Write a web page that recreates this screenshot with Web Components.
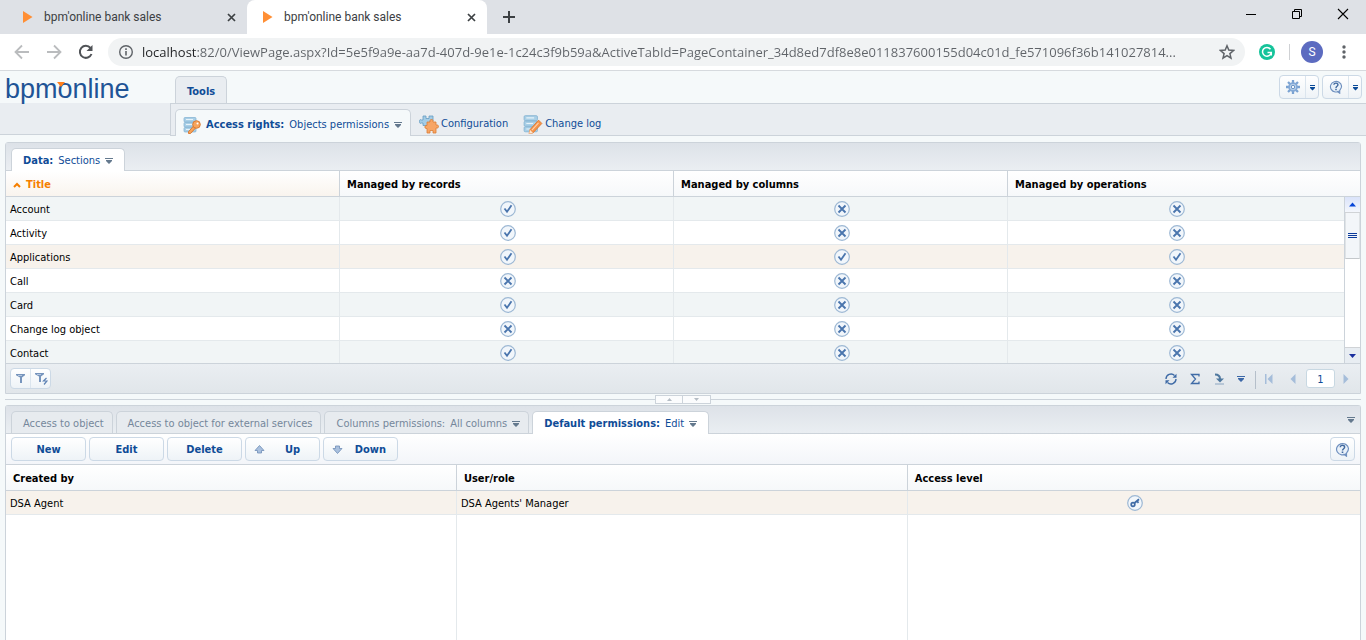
<!DOCTYPE html>
<html lang="en">
<head>
  <meta charset="utf-8" />
  <title>bpm'online bank sales</title>
  <style>
    html,
    body {
      height: 100%;
      margin: 0;
    }
    body {
      font: 11px/14px "DejaVu Sans Condensed", "Open Sans", sans-serif;
      color: #000;
      background: #f5f9fa;
      --line: #ccd3da;
      --link: #0f4c97;
    }
  </style>
</head>
<body>
  <bpm-app></bpm-app>

  <template id="browser-tab">
    <style>
      :host {
        display: flex;
        align-items: center;
        box-sizing: border-box;
        width: 240px;
        height: 34px;
        padding: 0 8px 0 14px;
        border-radius: 8px 8px 0 0;
        color: #3c4043;
        font: 12px/16px Roboto, sans-serif;
      }
      :host([active]) {
        background: #fff;
      }
      span {
        flex: 1;
        margin-left: 11px;
      }
      button {
        display: flex;
        padding: 2px;
        border: 0;
        background: none;
      }
    </style>
    <ui-icon name="play" size="12"></ui-icon>
    <span><slot></slot></span>
    <button aria-label="Close tab"><ui-icon name="x" size="11"></ui-icon></button>
  </template>

  <template id="browser-bar">
    <style>
      :host {
        display: block;
        background: #fff;
        border-bottom: 1px solid #d6dade;
      }
      button {
        display: flex;
        padding: 0;
        border: 0;
        background: none;
      }
      .tabs {
        display: flex;
        align-items: center;
        height: 34px;
        padding-left: 7px;
        background: #dee1e6;
      }
      .plus {
        margin-left: 15px;
        flex: 1;
      }
      .win {
        width: 46px;
        justify-content: center;
        align-self: flex-start;
        padding-top: 7px;
      }
      .bar {
        display: flex;
        align-items: center;
        height: 36px;
        padding: 0 14px;
      }
      .nav {
        display: flex;
        gap: 16px;
      }
      .address {
        display: flex;
        align-items: center;
        flex: 1;
        height: 28px;
        margin-left: 14px;
        padding: 0 10px;
        border-radius: 14px;
        background: #f1f3f4;
      }
      input {
        flex: 1;
        min-width: 0;
        margin: 0 10px 0 8px;
        padding: 0;
        border: 0;
        outline: 0;
        background: linear-gradient(to right, #202124 55px, #5f6368 55px);
        -webkit-background-clip: text;
        background-clip: text;
        -webkit-text-fill-color: transparent;
        color: #5f6368;
        font: 13px/20px "Open Sans", sans-serif;
        text-overflow: ellipsis;
      }
      .sep {
        width: 1px;
        height: 16px;
        margin: 0 11px 0 14px;
        background: #cfd1d4;
      }
      .g,
      .avatar {
        display: flex;
        align-items: center;
        justify-content: center;
        border-radius: 50%;
        color: #fff;
      }
      .g {
        margin-left: 14px;
      }
      .avatar {
        width: 22px;
        height: 22px;
        background: #5c6bc0;
        font: 12px/22px Roboto, sans-serif;
        margin-right: 13px;
      }
    </style>
    <div class="tabs">
      <browser-tab>bpm'online bank sales</browser-tab>
      <browser-tab active>bpm'online bank sales</browser-tab>
      <button class="plus" aria-label="New tab"><ui-icon name="plus" size="14"></ui-icon></button>
      <button class="win" aria-label="Minimize"><ui-icon name="min" size="14"></ui-icon></button>
      <button class="win" aria-label="Restore"><ui-icon name="restore" size="14"></ui-icon></button>
      <button class="win" aria-label="Close"><ui-icon name="close" size="14"></ui-icon></button>
    </div>
    <div class="bar">
      <div class="nav">
        <button aria-label="Back"><ui-icon name="back" size="16"></ui-icon></button>
        <button aria-label="Forward"><ui-icon name="forward" size="16"></ui-icon></button>
        <button aria-label="Reload"><ui-icon name="reload" size="16"></ui-icon></button>
      </div>
      <div class="address">
        <ui-icon name="info" size="16"></ui-icon>
        <input aria-label="Address" value="localhost:82/0/ViewPage.aspx?Id=5e5f9a9e-aa7d-407d-9e1e-1c24c3f9b59a&amp;ActiveTabId=PageContainer_34d8ed7df8e8e011837600155d04c01d_fe571096f36b141027814..." />
        <button aria-label="Bookmark"><ui-icon name="star" size="16"></ui-icon></button>
      </div>
      <span class="g"><ui-icon name="grammarly" size="16"></ui-icon></span>
      <span class="sep"></span>
      <button class="avatar">S</button>
      <button aria-label="Menu"><ui-icon name="dots" size="16"></ui-icon></button>
    </div>
  </template>

  <!-- tab used in the ribbon and on the panels -->
  <template id="bpm-tab">
    <style>
      :host {
        display: flex;
      }
      button {
        display: flex;
        align-items: center;
        gap: 5px;
        height: 22px;
        padding: 2px 8px 0 11px;
        border: 1px solid var(--line);
        border-bottom: 0;
        border-radius: 5px 5px 0 0;
        background: #e7ebef;
        color: #75879b;
        font: inherit;
        white-space: nowrap;
      }
      :host([active]) button {
        background: #fff;
        color: var(--link);
        height: 23px;
        margin-bottom: -1px;
        padding-right: 11px;
      }
      :host([active]) b {
        font-weight: bold;
      }
      b {
        font-weight: normal;
      }
      :host([ribbon]) button {
        height: 27px;
        padding: 3px 8px 0 7px;
        gap: 5px;
      }
      :host([ribbon][active]) button {
        padding-right: 8px;
        background: #f5f9fa;
      }
      :host([ribbon]:not([active])) button {
        height: 26px;
        gap: 2px;
        padding: 2px 6px 0 7px;
        border-color: transparent;
        background: none;
        color: var(--link);
      }
      :host([top]) button {
        height: 28px;
        padding: 2px 11px 0;
        background: #e9edf1;
      }
    </style>
    <button><slot name="icon"></slot><b><slot></slot></b><slot name="value"></slot></button>
  </template>

  <template id="bpm-button">
    <style>
      :host {
        display: flex;
      }
      button {
        display: flex;
        align-items: center;
        justify-content: center;
        min-width: 75px;
        height: 24px;
        padding: 2px 10px 0;
        border: 1px solid #ccd9e6;
        border-radius: 4px;
        background: linear-gradient(#fff, #eef3f7);
        color: var(--link);
        font: inherit;
        font-weight: bold;
      }
      :host([small]) button {
        min-width: 0;
        padding: 0 4px;
      }
      :host([arrow]) button {
        justify-content: space-between;
        padding: 2px 11px 0 8px;
      }
      :host([arrow="up"]) button {
        padding-right: 19px;
      }
    </style>
    <button><slot></slot></button>
  </template>

  <!-- two buttons sharing one frame -->
  <template id="bpm-split">
    <style>
      :host {
        display: flex;
        overflow: hidden;
        border: 1px solid #ccd9e6;
        border-radius: 4px;
        background: linear-gradient(#fff, #eef3f7);
      }
      button {
        display: flex;
        align-items: center;
        justify-content: center;
        width: 25px;
        height: 22px;
        padding: 0;
        border: 0;
        background: none;
      }
      button + button {
        width: 13px;
        border-left: 1px solid #dbe5ee;
      }
      :host([even]) button {
        width: 19px;
        height: 19px;
      }
      :host([even]) button + button {
        width: 20px;
      }
    </style>
    <button aria-label="Open"><slot name="a"></slot></button>
    <button aria-label="More"><slot name="b"></slot></button>
  </template>

  <template id="bpm-header">
    <style>
      :host {
        display: grid;
        grid-template-columns: 170px 1fr;
      }
      .logo {
        position: relative;
        height: 32px;
        box-sizing: border-box;
        padding-left: 5px;
        color: #1f5496;
        font: 27px/36px "Liberation Sans", sans-serif;
      }
      .logo i {
        position: absolute;
        left: 57px;
        top: 11px;
        border: 4px solid transparent;
        border-top: 5px solid #ff7e1b;
        border-bottom: 0;
      }
      .top {
        display: flex;
        align-items: flex-end;
        padding-left: 5px;
        padding-right: 4px;
      }
      .tools {
        display: flex;
        gap: 3px;
        margin-left: auto;
        align-self: center;
      }
      .left {
        height: 31px;
        background: #e9edf1;
        border-bottom: 1px solid var(--line);
      }
      .ribbon {
        display: flex;
        align-items: flex-end;
        height: 33px;
        box-sizing: border-box;
        padding-left: 4px;
        border: solid var(--line);
        border-width: 1px 0 1px 1px;
        background: #e9edf1;
      }
    </style>
    <div class="logo">bpmonline<i></i></div>
    <div class="top">
      <bpm-tab top active>Tools</bpm-tab>
      <div class="tools">
        <bpm-split><ui-icon slot="a" name="gear" size="14"></ui-icon><ui-icon slot="b" name="dropblue" size="7"></ui-icon></bpm-split>
        <bpm-split><ui-icon slot="a" name="help" size="14"></ui-icon><ui-icon slot="b" name="dropblue" size="7"></ui-icon></bpm-split>
      </div>
    </div>
    <div class="left"></div>
    <div class="ribbon">
      <bpm-tab ribbon active><ui-icon slot="icon" name="rights" size="18"></ui-icon>Access rights:<span slot="value">Objects permissions</span><ui-icon slot="value" name="drop" size="8"></ui-icon></bpm-tab>
      <bpm-tab ribbon><ui-icon slot="icon" name="config" size="20"></ui-icon>Configuration</bpm-tab>
      <bpm-tab ribbon><ui-icon slot="icon" name="log" size="20"></ui-icon>Change log</bpm-tab>
    </div>
  </template>

  <template id="bpm-panel">
    <style>
      :host {
        display: flex;
        flex-direction: column;
        border: 1px solid var(--line);
        border-radius: 3px 3px 0 0;
        background: #fff;
      }
      .tabs {
        display: flex;
        align-items: flex-end;
        gap: 3px;
        height: 27px;
        padding: 0 5px;
        border-bottom: 1px solid var(--line);
        background: linear-gradient(#dde2e8, #eaeef2);
      }
      .body {
        flex: 1;
        min-height: 0;
      }
    </style>
    <div class="tabs"><slot name="tab"></slot></div>
    <slot name="toolbar"></slot>
    <div class="body"><slot></slot></div>
    <slot name="footer"></slot>
  </template>

  <template id="bpm-grid">
    <style>
      :host {
        display: block;
        position: relative;
        height: 100%;
        overflow: hidden;
      }
      table {
        width: 100%;
        border-collapse: separate;
        border-spacing: 0;
        table-layout: fixed;
      }
      :host([fill]) table {
        height: 100%;
      }
      th {
        box-sizing: border-box;
        width: 33.3%;
        height: 26px;
        padding: 2px 7px 0;
        border-right: 1px solid var(--line);
        border-bottom: 1px solid var(--line);
        background: linear-gradient(#fff, #f6f8fa);
        text-align: left;
      }
      :host([scroll]) th {
        width: 24.67%;
      }
      th:last-child,
      :host([scroll]) th:last-child {
        width: auto;
        border-right: 0;
      }
      th.sorted {
        background: linear-gradient(#fff, #f9f4ee);
        color: #f57f00;
      }
      th.sorted ui-icon {
        display: inline-block;
        margin-right: 5px;
      }
      td {
        height: 21px;
        padding: 2px 4px 0;
        border-right: 1px solid #e4e9ec;
        border-bottom: 1px solid #e4e9ec;
      }
      td.icon {
        height: 23px;
        padding: 0 4px 0 6px;
      }
      td:last-child {
        border-right: 0;
      }
      td ui-icon {
        margin: 0 auto;
      }
      :host([scroll]) td:last-child {
        padding-right: 20px;
      }
      :host([scroll]) tr:nth-child(odd) td {
        background: #f1f5f6;
      }
      tr.selected td,
      :host([scroll]) tr.selected td {
        background: #f7f2ec;
      }
      tr.rest td {
        height: auto;
        border-bottom: 0;
      }
      .scroll {
        position: absolute;
        top: 26px;
        right: 0;
        bottom: 0;
        width: 15px;
        display: none;
        flex-direction: column;
        border-left: 1px solid var(--line);
        background: #fff;
      }
      :host([scroll]) .scroll {
        display: flex;
      }
      .arrow {
        display: flex;
        justify-content: center;
        align-items: center;
        height: 16px;
        margin: 0;
        padding: 0;
        border: 0;
        border-bottom: 1px solid #d0d3d6;
        background: linear-gradient(#dae3fa, #f4f7fc);
      }
      .arrow.down {
        margin-top: auto;
        border-bottom: 0;
        border-top: 1px solid #d0d3d6;
        background: #e8edf2;
      }
      .thumb {
        display: flex;
        align-items: center;
        justify-content: center;
        height: 45px;
        border: 1px solid #dfe3e6;
        border-bottom-color: #c4c8cb;
        border-top: 0;
        background: #f3f6f9;
      }
    </style>
    <table>
      <thead></thead>
      <tbody></tbody>
    </table>
    <div class="scroll">
      <button class="arrow" aria-label="Scroll up"><ui-icon name="sup" size="7"></ui-icon></button>
      <div class="thumb"><ui-icon name="grip" size="9"></ui-icon></div>
      <button class="arrow down" aria-label="Scroll down"><ui-icon name="sdown" size="7"></ui-icon></button>
    </div>
  </template>

  <template id="bpm-pager">
    <style>
      :host {
        display: flex;
        align-items: center;
        height: 29px;
        padding: 0 8px 0 4px;
        border-top: 1px solid var(--line);
        background: linear-gradient(#eaeef2, #e1e6ea);
      }
      button {
        display: flex;
        padding: 0;
        border: 0;
        background: none;
      }
      .right {
        display: flex;
        align-items: center;
        gap: 12px;
        margin-left: auto;
      }
      .sep {
        width: 1px;
        height: 18px;
        margin: 3px -5px 0 -2px;
        background: #b5bfca;
      }
      input {
        box-sizing: border-box;
        width: 29px;
        height: 19px;
        margin: 0 -7px 0 -5px;
        padding: 1px 0 0;
        border: 1px solid #c8d8e2;
        border-radius: 3px;
        background: #fff;
        color: var(--link);
        font: inherit;
        text-align: center;
      }
    </style>
    <bpm-split even><ui-icon slot="a" name="filter" size="11"></ui-icon><ui-icon slot="b" name="filterfast" size="14"></ui-icon></bpm-split>
    <div class="right">
      <button aria-label="Refresh"><ui-icon name="refresh" size="12"></ui-icon></button>
      <button aria-label="Total"><ui-icon name="sigma" size="12"></ui-icon></button>
      <button aria-label="Export"><ui-icon name="export" size="12"></ui-icon></button>
      <button aria-label="More"><ui-icon name="dropmid" size="8"></ui-icon></button>
      <span class="sep"></span>
      <button aria-label="First page"><ui-icon name="first" size="12"></ui-icon></button>
      <button aria-label="Previous page"><ui-icon name="prev" size="12"></ui-icon></button>
      <input aria-label="Page" value="1" />
      <button aria-label="Next page"><ui-icon name="next" size="12"></ui-icon></button>
    </div>
  </template>

  <template id="bpm-splitter">
    <style>
      :host {
        display: flex;
        align-items: center;
        height: 11px;
      }
      hr {
        flex: 1;
        margin: 0;
        border: 0;
        border-top: 1px solid var(--line);
      }
      button {
        display: flex;
        align-items: center;
        justify-content: center;
        width: 28px;
        height: 9px;
        padding: 0;
        border: 1px solid var(--line);
        background: #fbfcfd;
      }
      button + button {
        border-left: 0;
      }
    </style>
    <hr />
    <button aria-label="Collapse up"><ui-icon name="tinyup" size="5"></ui-icon></button>
    <button aria-label="Collapse down"><ui-icon name="tinydown" size="5"></ui-icon></button>
    <hr />
  </template>

  <template id="bpm-app">
    <style>
      :host {
        display: flex;
        flex-direction: column;
        height: 100vh;
        overflow: hidden;
      }
      main {
        flex: 1;
        min-height: 0;
        display: flex;
        flex-direction: column;
        padding: 6px 5px 0;
      }
      .sections bpm-grid {
        height: 192px;
      }
      .details {
        flex: 1;
        min-height: 0;
        border-bottom: 0;
      }
      .toolbar {
        display: flex;
        gap: 3px;
        padding: 3px 5px;
        border-bottom: 1px solid var(--line);
        background: linear-gradient(#fff, #f3f5f9);
      }
      .end {
        margin-left: auto;
      }
      .menu {
        align-self: center;
      }
    </style>
    <browser-bar></browser-bar>
    <bpm-header></bpm-header>
    <main>
      <bpm-panel class="sections">
        <bpm-tab slot="tab" active>Data:<span slot="value">Sections</span><ui-icon slot="value" name="drop" size="8"></ui-icon></bpm-tab>
        <bpm-grid id="sections" scroll></bpm-grid>
        <bpm-pager slot="footer"></bpm-pager>
      </bpm-panel>
      <bpm-splitter></bpm-splitter>
      <bpm-panel class="details">
        <bpm-tab slot="tab">Access to object</bpm-tab>
        <bpm-tab slot="tab">Access to object for external services</bpm-tab>
        <bpm-tab slot="tab">Columns permissions:<span slot="value">All columns</span><ui-icon slot="value" name="drop" size="8"></ui-icon></bpm-tab>
        <bpm-tab slot="tab" active>Default permissions:<span slot="value">Edit</span><ui-icon slot="value" name="drop" size="8"></ui-icon></bpm-tab>
        <ui-icon slot="tab" class="end menu" name="drop" size="8"></ui-icon>
        <div class="toolbar" slot="toolbar">
          <bpm-button>New</bpm-button>
          <bpm-button>Edit</bpm-button>
          <bpm-button>Delete</bpm-button>
          <bpm-button arrow="up"><ui-icon name="up" size="11"></ui-icon>Up</bpm-button>
          <bpm-button arrow="down"><ui-icon name="down" size="11"></ui-icon>Down</bpm-button>
          <bpm-button class="end" small><ui-icon name="help" size="15"></ui-icon></bpm-button>
        </div>
        <bpm-grid id="roles" fill></bpm-grid>
      </bpm-panel>
    </main>
  </template>

  <script>
    // each icon: viewBox size and content
    const dropShape = (c) => `<path fill="${c}" d="M0 1h8v1H0zM1 3h6v1L4 7 1 4z"/>`;
    const ring = `<circle cx="8" cy="8" r="7.300" fill="#f1f6fb" stroke="#9db8d4" stroke-width="1.200"/>`;
    const sheets = `<g fill="#a9cfe6" stroke="#7fb0d1" stroke-width=".7"><rect x="1" y="1.500" width="12" height="4.500" rx="1"/><rect x="1" y="6.500" width="12" height="4.500" rx="1"/><rect x="1" y="11.500" width="12" height="4.500" rx="1"/></g><path stroke="#e6f3fa" d="M3 3.500h7M3 8.500h6M3 13.500h4"/>`;
    const funnel = `<path fill="#7795bd" d="M1 1h9v1.200L7 4.500V10H5V4.500L1 2.200z"/><path stroke="#c6d5e8" stroke-width=".8" d="M3 2.500h4"/>`;
    const ICONS = {
      play: [12, `<path fill="#ff8f35" d="M2 0v12l9.500-6z"/>`],
      x: [11, `<path stroke="#3c4043" stroke-width="1.700" d="M2 2l7 7M9 2l-7 7"/>`],
      plus: [14, `<path stroke="#3c4043" stroke-width="2" d="M7 1v12M1 7h12"/>`],
      min: [14, `<path fill="#000" d="M2 7h10v1H2z"/>`],
      restore: [14, `<path fill="none" stroke="#000" d="M2.500 4.500h7v7h-7zM4.500 4.500v-2h7v7h-2"/>`],
      close: [14, `<path stroke="#000" stroke-width="1.100" d="M2 2l10 10M12 2L2 12"/>`],
      back: [16, `<path fill="none" stroke="#babcbe" stroke-width="1.800" d="M15 8H2M8 1.500L1.500 8 8 14.500"/>`],
      forward: [16, `<path fill="none" stroke="#babcbe" stroke-width="1.800" d="M1 8h13M8 1.500L14.500 8 8 14.500"/>`],
      reload: [16, `<path fill="none" stroke="#505357" stroke-width="2" d="M13.500 10A6 6 0 1 1 12.500 4"/><path fill="#505357" d="M14.500 1v6h-6z"/>`],
      info: [16, `<circle cx="8" cy="8" r="6.300" fill="none" stroke="#5f6368" stroke-width="1.400"/><path fill="#5f6368" d="M7.200 7h1.600v4.500H7.200zM7.200 4.300h1.600v1.600H7.200z"/>`],
      star: [16, `<path fill="none" stroke="#5f6368" stroke-width="1.500" d="M8 1.800l1.800 4.300 4.700.4-3.600 3.100 1.100 4.600L8 11.700l-4 2.500 1.100-4.600L1.500 6.500l4.700-.4z"/>`],
      grammarly: [16, `<circle cx="8" cy="8" r="8" fill="#15c39a"/><path fill="none" stroke="#fff" stroke-width="1.500" d="M11.500 5.200A4.400 4.400 0 1 0 12.300 8.500H8.500M12.300 8.300v3.200"/>`],
      dots: [16, `<g fill="#5f6368"><circle cx="8" cy="3" r="1.700"/><circle cx="8" cy="8" r="1.700"/><circle cx="8" cy="13" r="1.700"/></g>`],
      drop: [8, dropShape("#64798e")],
      dropmid: [8, dropShape("#3c68a8")],
      dropblue: [7, `<path fill="#0a4a98" d="M1 1h5v1H1zM1 3h5v1L3.500 6.500 1 4z"/>`],
      gear: [16, `<path stroke="#7aa2d2" stroke-width="2.600" d="M8 0v16M0 8h16M2.300 2.300l11.400 11.400M13.700 2.300L2.300 13.700"/><circle cx="8" cy="8" r="5.500" fill="#84a9d6"/><circle cx="8" cy="8" r="3.500" fill="#c4d8ee"/><circle cx="8" cy="8" r="2" fill="#f4f8fc" stroke="#5583bc"/>`],
      help: [15, `<path fill="#e9f1f9" stroke="#6f90bf" stroke-width="1.200" d="M11.500 11.500A6 5.700 0 1 1 13.500 6.500C13.500 9 12 10.300 11.500 11v3.200L8.500 12"/><path fill="none" stroke="#41699f" stroke-width="1.500" d="M5.300 5.200c0-2.600 4.300-2.400 4.300 0C9.600 6.700 7.500 6.800 7.500 8.500"/><path fill="#41699f" d="M6.700 9.500h1.600V11H6.700z"/>`],
      rights: [18, sheets + `<g fill="#f6a45c" stroke="#d8752a" stroke-width=".9"><path d="M11 9.500l2 2-5.500 6H5.500v-1.800z"/><circle cx="13.500" cy="8.500" r="3.800"/></g><circle cx="14.500" cy="7.500" r="1" fill="#fff"/>`],
      log: [18, sheets + `<path fill="#f5934a" stroke="#d8752a" stroke-width=".7" d="M14 5.500l3 3-8 8.500-3.500.7.700-3.500z"/><path stroke="#ffd0a8" d="M14 8l-6 6.500"/><path fill="#fbe6d2" d="M6.200 14.200l2.800 2.800-3.500.7z"/>`],
      config: [20, `<path fill="#a3cce6" stroke="#669dc2" stroke-width=".8" d="M4 2h3v2.500h3V2h4v5h-3v6H7.500v-1.500H4V9H2.500C1 10 .5 9 .5 7.500S1 5 2.500 6H4z"/><path fill="#f7a565" stroke="#dc7f35" stroke-width=".8" d="M8 8h3V6.500c0-1.300 3-1.300 3 0V8h3v3h1.500c1.300 0 1.300 3 0 3H17v5h-3v-2.500h-3V19H8v-4.500H7c-1.500 0-1.500-3 0-3h1z"/>`],
      sort: [8, `<path fill="none" stroke="#f57f00" stroke-width="2" d="M1 7l3-3 3 3"/>`],
      yes: [16, ring + `<path fill="none" stroke="#4a75ad" stroke-width="1.800" d="M4.500 7.500L7 10.800l4.500-6.500"/>`],
      no: [16, ring + `<path stroke="#4a75ad" stroke-width="1.900" d="M4.500 4.500l7 7M11.500 4.500l-7 7"/>`],
      key: [16, ring + `<circle cx="6" cy="9.500" r="1.800" fill="none" stroke="#3f6ba6" stroke-width="1.700"/><path stroke="#3f6ba6" stroke-width="1.800" d="M7.500 8L12 4.200M10 6l1.500 1.800"/>`],
      sup: [7, `<path fill="#0645d8" d="M0 5.500h7L3.500 1.500z"/>`],
      sdown: [7, `<path fill="#1a2f9e" d="M0 2h7L3.500 6z"/>`],
      grip: [9, `<path fill="#0b3a9b" d="M0 2h9v1H0zM0 4h9v1H0zM0 6h9v1H0z"/>`],
      up: [11, `<path fill="#a9c0de" stroke="#6f8db6" stroke-width=".8" d="M5.500.5L10 5.500H7.500V8h-4V5.500H1z"/>`],
      down: [11, `<path fill="#a9c0de" stroke="#6f8db6" stroke-width=".8" d="M5.500 8.500L10 3.500H7.500V1h-4v2.500H1z"/>`],
      tinyup: [5, `<path fill="#b4bcc4" d="M0 4h5L2.500 1z"/>`],
      tinydown: [5, `<path fill="#b4bcc4" d="M0 1h5L2.500 4z"/>`],
      filter: [11, funnel],
      filterfast: [14, funnel + `<path fill="none" stroke="#5f83b5" stroke-width="1.200" d="M12.500 6L9.500 9h3.500L10 12.500"/>`],
      refresh: [12, `<g fill="none" stroke="#3f6ba6" stroke-width="1.400"><path d="M1 6A5 5 0 0 1 9.500 2.500"/><path d="M11 6A5 5 0 0 1 2.500 9.500"/></g><path fill="#3f6ba6" d="M11.500.8v4H7.500zM.5 11.200v-4h4z"/>`],
      sigma: [12, `<path fill="none" stroke="#3f6ba6" stroke-width="1.300" d="M10 3.500V1.500H2.500L6.500 6l-4 4.500H10v-2"/>`],
      export: [12, `<path fill="none" stroke="#4f789f" stroke-width="2" d="M2 1.500C5.500 1.500 7 3 7 6"/><path fill="#4f789f" d="M3 5.500h8L7 9.500z"/><path fill="#8aa5c0" d="M2 10.500h9v1H2z"/>`],
      first: [12, `<path fill="#a5bdda" d="M2 1h1.500v10H2zM9.500 1v10l-5-5z"/>`],
      prev: [12, `<path fill="#a5bdda" d="M8.500 1v10l-5-5z"/>`],
      next: [12, `<path fill="#a5bdda" d="M3.500 1v10l5-5z"/>`],
    };

    class UiIcon extends HTMLElement {
      connectedCallback() {
        if (this.shadowRoot) return;
        const [box, body] = ICONS[this.getAttribute("name")];
        const size = this.getAttribute("size") || box;
        this.attachShadow({ mode: "open" });
        this.shadowRoot.innerHTML = `
          <style>
            :host { display: block; flex: none; width: ${size}px; height: ${size}px; }
            svg { display: block; }
          </style>
          <svg width="${size}" height="${size}" viewBox="0 0 ${box} ${box}" aria-hidden="true">${body}</svg>`;
      }
    }
    customElements.define("ui-icon", UiIcon);

    class TemplateElement extends HTMLElement {
      connectedCallback() {
        if (this.shadowRoot) return;
        const template = document.getElementById(this.localName);
        this.attachShadow({ mode: "open" });
        this.shadowRoot.append(template.content.cloneNode(true));
        this.ready();
      }
      ready() {}
    }

    class BpmGrid extends TemplateElement {
      // columns: titles, rows: arrays of text or icon:name
      show(columns, rows, selected, sorted) {
        const cell = (value) =>
          value.startsWith("icon:")
            ? `<td class="icon"><ui-icon name="${value.slice(5)}" size="16"></ui-icon></td>`
            : `<td>${value}</td>`;
        const head = columns.map((title, i) =>
          i === sorted
            ? `<th class="sorted"><ui-icon name="sort" size="8"></ui-icon>${title}</th>`
            : `<th>${title}</th>`
        );
        this.shadowRoot.querySelector("thead").innerHTML = `<tr>${head.join("")}</tr>`;
        let html = rows
          .map((row, i) => `<tr class="${i === selected ? "selected" : ""}">${row.map(cell).join("")}</tr>`)
          .join("");
        if (this.hasAttribute("fill")) {
          html += `<tr class="rest">${"<td></td>".repeat(columns.length)}</tr>`;
        }
        this.shadowRoot.querySelector("tbody").innerHTML = html;
      }
    }

    class BpmApp extends TemplateElement {
      ready() {
        const y = "icon:yes";
        const n = "icon:no";
        this.shadowRoot.querySelector("#sections").show(
          ["Title", "Managed by records", "Managed by columns", "Managed by operations"],
          [
            ["Account", y, n, n],
            ["Activity", y, n, n],
            ["Applications", y, y, y],
            ["Call", n, n, n],
            ["Card", y, n, n],
            ["Change log object", n, n, n],
            ["Contact", y, n, n],
          ],
          2,
          0
        );
        this.shadowRoot.querySelector("#roles").show(
          ["Created by", "User/role", "Access level"],
          [["DSA Agent", "DSA Agents' Manager", "icon:key"]],
          0
        );
      }
    }

    ["browser-tab", "browser-bar", "bpm-tab", "bpm-button", "bpm-split", "bpm-header", "bpm-panel", "bpm-pager", "bpm-splitter"].forEach((name) =>
      customElements.define(name, class extends TemplateElement {})
    );
    customElements.define("bpm-grid", BpmGrid);
    customElements.define("bpm-app", BpmApp);
  </script>
</body>
</html>
